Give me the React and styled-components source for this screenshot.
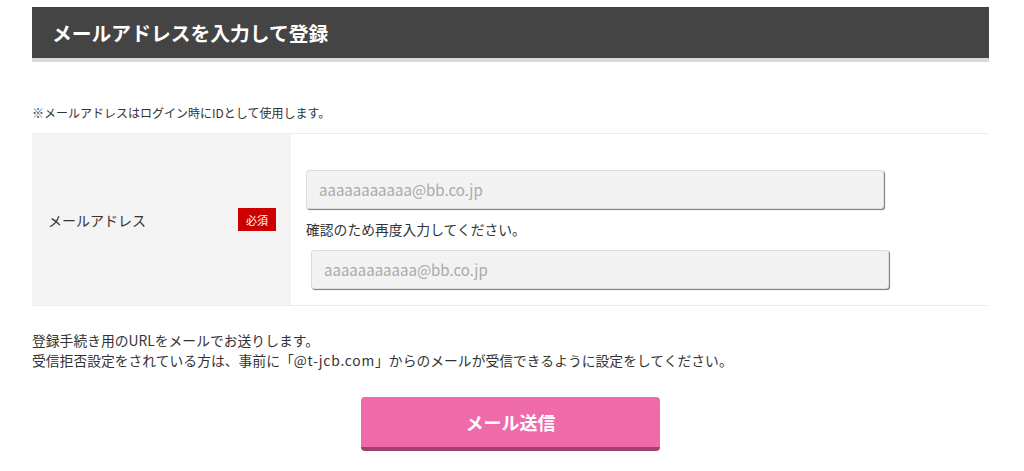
import React from "react";
import styled, { createGlobalStyle } from "styled-components";

const Global = createGlobalStyle`
  html, body { margin: 0; padding: 0; background: #fff; }
  body { font-family: "Noto Sans CJK JP", "Noto Sans", sans-serif; color: #333; }
  * { box-sizing: border-box; }
`;

const Page = styled.div`
  width: 957px;
  margin-left: 32px;
  padding-top: 7px;
`;

const Header = styled.div`
  height: 55px;
  background: #444;
  border-bottom: 4px solid #d9d9d9;
  display: flex;
  align-items: center;
  padding-left: 20px;
`;

const Title = styled.h1`
  margin: 0;
  font-size: 19.8px;
  font-weight: 700;
  color: #fff;
  line-height: 1;
`;

const Note = styled.p`
  margin: 42px 0 11px;
  font-size: 12px;
  line-height: 18px;
  color: #333;
`;

const Table = styled.div`
  display: grid;
  grid-template-columns: 259px 1fr;
  border-top: 1px solid #ececec;
  border-bottom: 1px solid #ececec;
`;

const LabelCell = styled.div`
  background: #f4f4f4;
  display: flex;
  align-items: center;
  justify-content: space-between;
  padding: 0 15px 0 16px;
`;

const Label = styled.span`
  font-size: 14px;
  color: #333;
`;

const Badge = styled.span`
  width: 38px;
  height: 23px;
  background: #cc0000;
  color: #fff;
  font-size: 11px;
  display: flex;
  align-items: center;
  justify-content: center;
`;

const FieldCell = styled.div`
  padding: 36px 0 16px 15px;
  display: flex;
  flex-direction: column;
  align-items: flex-start;
`;

const Input = styled.input`
  width: 578px;
  height: 39px;
  margin-left: ${(p) => p.$shift || 0}px;
  background: #f2f2f2;
  border: 1px solid #dcdcdc;
  border-radius: 3px;
  box-shadow: 1px 1px 1px #7a7a7a;
  padding: 0 12px;
  font-family: inherit;
  font-size: 15px;
  color: #333;
  outline: none;
  &::placeholder { color: #aaa; }
`;

const Hint = styled.p`
  margin: 10px 0 11px;
  font-size: 13.8px;
  line-height: 20px;
  color: #333;
`;

const Info = styled.div`
  margin-top: 24px;
  font-size: 13.8px;
  line-height: 20px;
  color: #333;
`;

const Domain = styled.span`
  letter-spacing: 0.8px;
`;

const ButtonRow = styled.div`
  display: flex;
  justify-content: center;
  margin-top: 27px;
`;

const SendButton = styled.button`
  width: 299px;
  height: 54px;
  background: #ef6aa9;
  border: none;
  border-bottom: 4px solid #a3406f;
  border-radius: 4px;
  color: #fff;
  font-family: inherit;
  font-size: 18px;
  font-weight: 700;
  cursor: pointer;
  padding: 0;
`;

export default function App() {
  return (
    <>
      <Global />
      <Page>
        <Header>
          <Title>メールアドレスを入力して登録</Title>
        </Header>
        <Note>※メールアドレスはログイン時にIDとして使用します。</Note>
        <Table>
          <LabelCell>
            <Label>メールアドレス</Label>
            <Badge>必須</Badge>
          </LabelCell>
          <FieldCell>
            <Input type="text" placeholder="aaaaaaaaaaa@bb.co.jp" />
            <Hint>確認のため再度入力してください。</Hint>
            <Input type="text" $shift={5} placeholder="aaaaaaaaaaa@bb.co.jp" />
          </FieldCell>
        </Table>
        <Info>
          登録手続き用のURLをメールでお送りします。
          <br />
          受信拒否設定をされている方は、事前に「<Domain>@t-jcb.com</Domain>」からのメールが受信できるように設定をしてください。
        </Info>
        <ButtonRow>
          <SendButton>メール送信</SendButton>
        </ButtonRow>
      </Page>
    </>
  );
}
